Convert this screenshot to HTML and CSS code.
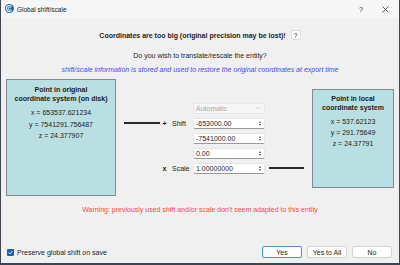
FILE: index.html
```html
<!DOCTYPE html>
<html lang="en">
<head>
    <meta charset="UTF-8">
    <title>Global shift/scale</title>
    <link rel="stylesheet" href="styles.css">
</head>
<body>
    <div class="window">
        <div class="titlebar">
            <svg class="app-icon" width="9" height="9" viewBox="0 0 9 9">
                <circle cx="4.5" cy="4.5" r="4.5" fill="#1f6db3"/>
                <path d="M6.6 2.4 A3 3 0 1 0 6.6 6.6" fill="none" stroke="#fff" stroke-width="1.1"/>
                <path d="M5.6 3.5 A1.4 1.4 0 1 0 5.6 5.5" fill="none" stroke="#fff" stroke-width="1"/>
            </svg>
            <span class="title">Global shift/scale</span>
            <span class="tb-help">?</span>
            <svg class="tb-close" width="7" height="7" viewBox="0 0 7 7">
                <path d="M0.5 0.5 L6.5 6.5 M6.5 0.5 L0.5 6.5" stroke="#333" stroke-width="0.8"/>
            </svg>
        </div>

        <div class="content">
            <div class="heading">
                <span>Coordinates are too big (original precision may be lost)!</span>
                <span class="help-btn">?</span>
            </div>
            <p class="question">Do you wish to translate/rescale the entity?</p>
            <p class="info">shift/scale information is stored and used to restore the original coordinates at export time</p>

            <div class="middle">
                <div class="point-box original">
                    <div class="box-title">Point in original<br>coordinate system (on disk)</div>
                    <div class="box-values">
                        <div>x = 653537.621234</div>
                        <div>y = 7541291.756487</div>
                        <div>z = 24.377907</div>
                    </div>
                </div>

                <div class="transform">
                    <div class="combo cell-input r1">
                        <span>Automatic</span>
                        <svg width="6" height="4" viewBox="0 0 6 4"><path d="M0.5 0.5 L3 3 L5.5 0.5" fill="none" stroke="#c4c4c4" stroke-width="0.7"/></svg>
                    </div>

                    <div class="line r2 c1"></div>
                    <span class="sign r2">+</span>
                    <span class="label r2">Shift</span>
                    <div class="spin cell-input r2"><span>-653000.00</span><span class="arrows"><i class="up"></i><i class="down"></i></span></div>
                    <div class="spin cell-input r3"><span>-7541000.00</span><span class="arrows"><i class="up"></i><i class="down"></i></span></div>
                    <div class="spin cell-input r4"><span>0.00</span><span class="arrows"><i class="up"></i><i class="down"></i></span></div>

                    <span class="sign r5">x</span>
                    <span class="label r5">Scale</span>
                    <div class="spin cell-input r5"><span>1.00000000</span><span class="arrows"><i class="up"></i><i class="down"></i></span></div>
                    <div class="line r5 c5"></div>
                </div>

                <div class="point-box local">
                    <div class="box-title">Point in local<br>coordinate system</div>
                    <div class="box-values">
                        <div>x = 537.62123</div>
                        <div>y = 291.75649</div>
                        <div>z = 24.37791</div>
                    </div>
                </div>
            </div>

            <p class="warning">Warning: previously used shift and/or scale don't seem adapted to this entity</p>

            <div class="footer">
                <label class="keep">
                    <span class="checkbox">
                        <svg width="7" height="7" viewBox="0 0 7 7"><path d="M1.6 3.6 L2.9 4.9 L5.4 2.1" fill="none" stroke="#fff" stroke-width="0.9"/></svg>
                    </span>
                    Preserve global shift on save
                </label>
                <div class="buttons">
                    <button class="default">Yes</button>
                    <button>Yes to All</button>
                    <button>No</button>
                </div>
            </div>
        </div>
    </div>
</body>
</html>
```

FILE: styles.css
```css
* {
    box-sizing: border-box;
}

body {
    margin: 0;
    font-family: 'Liberation Sans', Arial, sans-serif;
    font-size: 7px;
    color: #1e1e1e;
    background: #2c3138;
}

p {
    margin: 0;
}

.window {
    width: 400px;
    height: 265px;
    display: flex;
    flex-direction: column;
    background: #f0f0f0;
    border: 1px solid #3d4550;
    border-top: none;
    border-bottom-width: 2px;
}

.titlebar {
    height: 18px;
    display: flex;
    align-items: center;
    background: #f6f6f6;
    padding: 0 0 0 4px;
}

.app-icon {
    margin-top: -1px;
}

.title {
    margin-left: 3px;
    font-size: 6.5px;
    color: #222;
    flex: 1;
}

.tb-help {
    font-size: 7px;
    color: #333;
    margin-right: 19px;
}

.tb-close {
    margin-right: 10px;
}

.content {
    flex: 1;
    display: flex;
    flex-direction: column;
    padding: 0 5px 5px 5px;
}

.heading {
    margin-top: 12px;
    display: flex;
    justify-content: center;
    align-items: center;
    gap: 5px;
    font-weight: bold;
    font-size: 7px;
    height: 10px;
}

.help-btn {
    width: 10px;
    height: 10px;
    line-height: 9px;
    text-align: center;
    font-weight: normal;
    font-size: 6.5px;
    background: #fdfdfd;
    border: 1px solid #dcdcdc;
    border-radius: 2px;
}

.question {
    margin-top: 10px;
    text-align: center;
    line-height: 11px;
}

.info {
    margin-top: 3px;
    text-align: center;
    line-height: 11px;
    font-style: italic;
    color: #4646ff;
}

.middle {
    margin-top: 4px;
    height: 117px;
    display: flex;
    align-items: center;
    justify-content: space-between;
}

.point-box {
    background: #b9dfe2;
    border: 1px solid #7f8b8c;
    text-align: center;
    color: #222;
}

.point-box.original {
    width: 110px;
    height: 117px;
    padding-top: 5.5px;
    margin-top: -1px;
}

.point-box.local {
    width: 82px;
    height: 99px;
    padding-top: 4.5px;
    margin-top: 1px;
}

.box-title {
    font-weight: bold;
    line-height: 9px;
}

.box-values {
    margin-top: 4px;
    line-height: 11.5px;
}

.point-box.local .box-values {
    line-height: 11px;
}

.transform {
    display: grid;
    grid-template-columns: 36px 9px 24px 72px 39px;
    grid-template-rows: repeat(5, 11px);
    row-gap: 4px;
    align-items: center;
    margin-top: 1px;
}

.r1 { grid-row: 1; }
.r2 { grid-row: 2; }
.r3 { grid-row: 3; }
.r4 { grid-row: 4; }
.r5 { grid-row: 5; }
.c1 { grid-column: 1; }
.c5 { grid-column: 5; }

.line {
    height: 2px;
    background: #2a2a2a;
}

.line.c5 {
    margin-left: 4px;
}

.sign {
    grid-column: 2;
    text-align: center;
    font-weight: bold;
}

.label {
    grid-column: 3;
    padding-left: 3px;
}

.cell-input {
    grid-column: 4;
    height: 11px;
    display: flex;
    align-items: center;
    justify-content: space-between;
    padding: 0 2px 0 2px;
    border-radius: 2px;
}

.combo {
    background: #f6f6f6;
    border: 1px solid #e8e8e8;
    color: #a9a9a9;
    padding-right: 3px;
}

.spin {
    background: #fff;
    border: 1px solid #e6e6e6;
    border-bottom-color: #9a9a9a;
}

.arrows {
    display: flex;
    flex-direction: column;
    gap: 1px;
    padding-right: 1px;
}

.arrows i {
    width: 0;
    height: 0;
    border-left: 1.5px solid transparent;
    border-right: 1.5px solid transparent;
}

.arrows .up {
    border-bottom: 2px solid #444;
}

.arrows .down {
    border-top: 2px solid #444;
}

.warning {
    margin-top: 8px;
    text-align: center;
    line-height: 11px;
    color: #ff4545;
}

.footer {
    margin-top: auto;
    display: flex;
    justify-content: space-between;
    align-items: center;
    padding-left: 1px;
    padding-right: 2px;
}

.keep {
    display: flex;
    align-items: center;
    gap: 3px;
}

.checkbox {
    width: 7px;
    height: 7px;
    border-radius: 1px;
    background: #1a62b8;
    display: flex;
}

.buttons {
    display: flex;
    gap: 5px;
}

button {
    width: 40px;
    height: 12px;
    padding: 0;
    font-family: inherit;
    font-size: 7px;
    color: #1e1e1e;
    background: #fdfdfd;
    border: 1px solid #d4d4d4;
    border-radius: 2px;
}

button.default {
    border-color: #4a8fd8;
}
```
